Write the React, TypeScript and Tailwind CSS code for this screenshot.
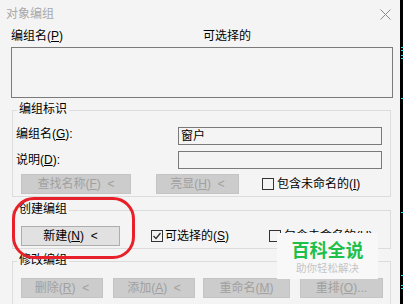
import type { ReactNode } from "react";

const bg = "bg-[#f4f4f4]";

function Mn({ children }: { children: ReactNode }) {
  return <u className="underline underline-offset-[1px]">{children}</u>;
}

function Legend({ children }: { children: ReactNode }) {
  return (
    <div className={`-mt-[9px] ml-[4px] h-[14px] w-fit px-[2px] ${bg}`}>
      {children}
    </div>
  );
}

function Btn({
  width,
  disabled = true,
  children
}: {
  width: string;
  disabled?: boolean;
  children: ReactNode;
}) {
  return (
    <div
      className={`flex h-[20px] shrink-0 items-center justify-center border ${width} ${
        disabled
          ? "border-[#c4c4c4] bg-[#cccccc] text-[#a0a0a0]"
          : "border-[#adadad] bg-[#e1e1e1] text-black"
      }`}
    >
      {children}
    </div>
  );
}

function Check({ checked = false }: { checked?: boolean }) {
  return (
    <div className="flex size-[12px] shrink-0 items-center justify-center border border-[#333333] bg-[#f4f4f4]">
      {checked && (
        <svg width="10" height="10" viewBox="0 0 10 10">
          <path d="M1.5 5 L4 7.5 L8.5 2" fill="none" stroke="#333333" strokeWidth="1.3" />
        </svg>
      )}
    </div>
  );
}

const marks = ["mt-[47px]", "mt-[2px]", "mt-[4px]", "mt-[2px]", "mt-[39px]", "mt-[113px]", "mt-[62px]", "mt-[9px]", "mt-[2px]"];

export default function App() {
  return (
    <div className="flex h-[304px] w-[403px] overflow-hidden bg-black font-['Liberation_Sans','Noto_Sans_CJK_SC',sans-serif] text-[12px] leading-[14px] text-black">
      <div className={`relative h-full w-[400px] shrink-0 ${bg}`}>
        {/* title bar */}
        <div className="flex h-[29px] items-start justify-between pl-[6px] pr-[9px] pt-[7px]">
          <span className="text-[#a9a9a9]">对象编组</span>
          <svg width="11" height="11" viewBox="0 0 11 11" className="mt-[2px]">
            <path d="M0.5 0.5 L10.5 10.5 M10.5 0.5 L0.5 10.5" stroke="#8a8a8a" strokeWidth="1" />
          </svg>
        </div>

        {/* list header */}
        <div className="flex h-[14px] pl-[11px]">
          <span className="w-[192px]">
            编组名(<Mn>P</Mn>)
          </span>
          <span>可选择的</span>
        </div>
        <div className="ml-[11px] mt-[4px] h-[51px] w-[382px] border border-[#7a7a7a]" />

        {/* 编组标识 */}
        <div className="ml-[12px] mt-[12px] h-[87px] w-[379px] border border-[#dcdcdc]">
          <Legend>编组标识</Legend>
          <div className="mt-[11px] flex items-start">
            <span className="ml-[3px] w-[162px]">
              编组名(<Mn>G</Mn>):
            </span>
            <div className="flex h-[18px] w-[204px] items-center border border-[#7a7a7a] pl-[2px]">
              窗户
            </div>
          </div>
          <div className="mt-[6px] flex items-start">
            <span className="ml-[3px] mt-[2px] w-[162px]">
              说明(<Mn>D</Mn>):
            </span>
            <div className="h-[18px] w-[204px] border border-[#7a7a7a]" />
          </div>
          <div className="mt-[5px] flex items-center">
            <div className="ml-[8px]">
              <Btn width="w-[110px]">
                查找名称(<Mn>F</Mn>)&nbsp;&nbsp;&lt;
              </Btn>
            </div>
            <div className="ml-[25px]">
              <Btn width="w-[83px]">
                亮显(<Mn>H</Mn>)&nbsp;&nbsp;&lt;
              </Btn>
            </div>
            <div className="ml-[23px] flex items-center gap-[3px]">
              <Check />
              <span>
                包含未命名的(<Mn>I</Mn>)
              </span>
            </div>
          </div>
        </div>

        {/* 创建编组 */}
        <div className="ml-[12px] mt-[13px] h-[39px] w-[379px] border border-[#dcdcdc]">
          <Legend>创建编组</Legend>
          <div className="mt-[10px] flex items-center">
            <div className="ml-[8px]">
              <Btn width="w-[99px]" disabled={false}>
                新建(<Mn>N</Mn>)&nbsp;&nbsp;&lt;
              </Btn>
            </div>
            <div className="ml-[31px] flex w-[118px] items-center gap-[2px]">
              <Check checked />
              <span>
                可选择的(<Mn>S</Mn>)
              </span>
            </div>
            <div className="flex items-center gap-[3px]">
              <Check />
              <span>
                包含未命名的(<Mn>U</Mn>)
              </span>
            </div>
          </div>
        </div>

        {/* 修改编组 */}
        <div className="ml-[12px] mt-[12px] h-[60px] w-[379px] border border-[#dcdcdc]">
          <Legend>修改编组</Legend>
          <div className="mt-[11px] flex items-center">
            <div className="ml-[8px]">
              <Btn width="w-[82px]">
                删除(<Mn>R</Mn>)&nbsp;&nbsp;&lt;
              </Btn>
            </div>
            <div className="ml-[10px]">
              <Btn width="w-[82px]">
                添加(<Mn>A</Mn>)&nbsp;&nbsp;&lt;
              </Btn>
            </div>
            <div className="ml-[8px]">
              <Btn width="w-[87px]">
                重命名(<Mn>M</Mn>)
              </Btn>
            </div>
            <div className="ml-[10px]">
              <Btn width="w-[83px]">
                重排(<Mn>O</Mn>)...
              </Btn>
            </div>
          </div>
        </div>

        {/* red highlight */}
        <div className="absolute left-[12px] top-[197px] h-[62px] w-[123px] rounded-[22px] border-[3px] border-[#e8202a]" />

        {/* watermark */}
        <div className="absolute left-[277px] top-[233px] flex h-[46px] w-[101px] flex-col items-center bg-[#f8f8f8] pt-[8px]">
          <span className="text-[18px] font-bold leading-[20px] text-[#1ec04a]">百科全说</span>
          <span className="mt-[1px] text-[10.5px] leading-[12px] text-[#c4c4c4]">助你轻松解决</span>
        </div>
      </div>

      {/* right edge */}
      <div className="flex w-[3px] flex-col">
        {marks.map((m, i) => (
          <div key={i} className={`${m} ml-[1px] h-[1px] w-[2px] bg-[#19e6f0]`} />
        ))}
      </div>
    </div>
  );
}
